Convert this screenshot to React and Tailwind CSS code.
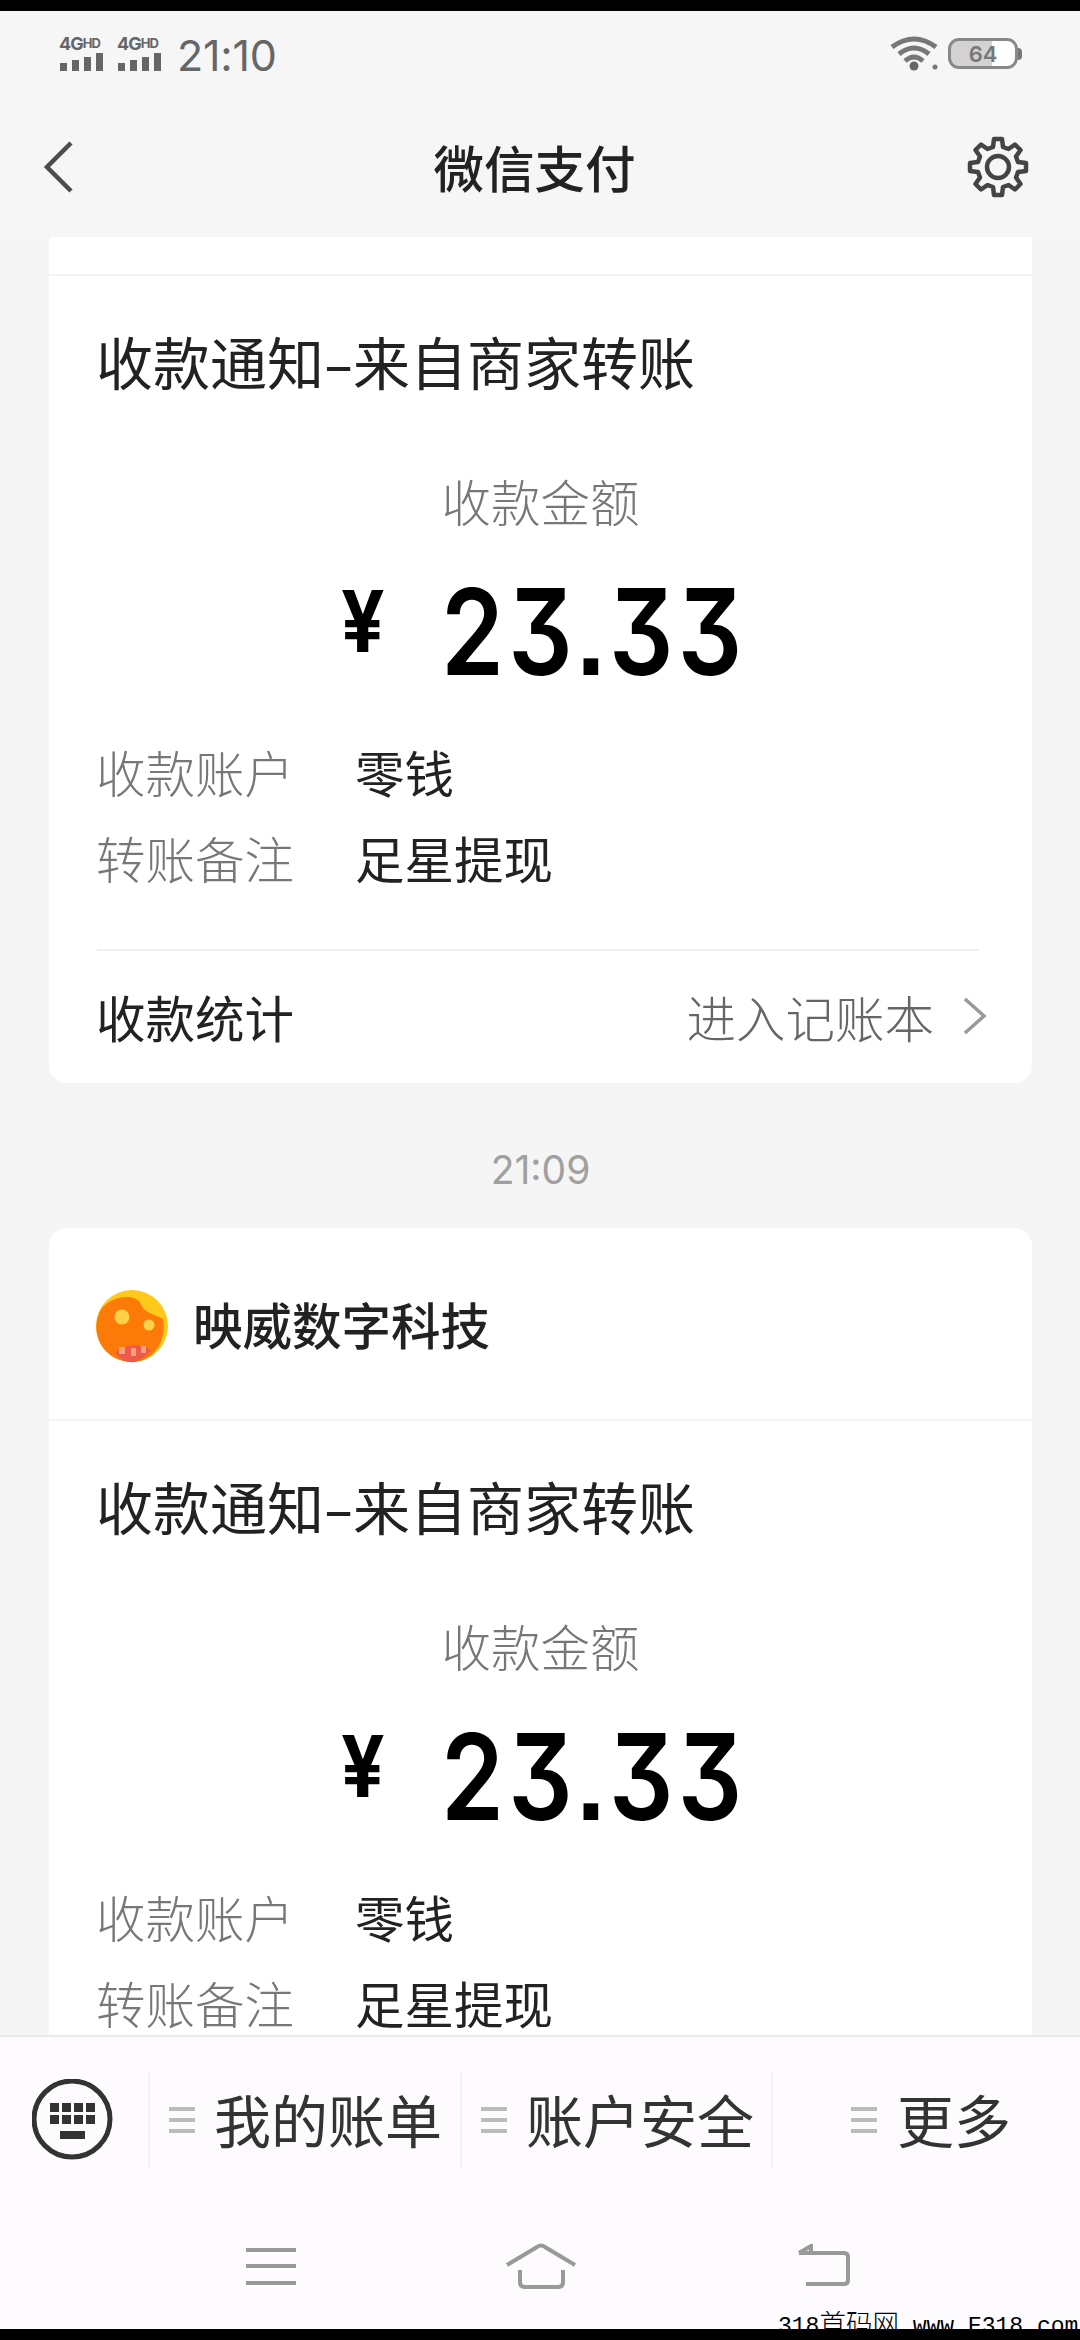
const details = [
  { label: "收款账户", value: "零钱" },
  { label: "转账备注", value: "足星提现" },
];

const menus = [
  { label: "我的账单", box: "w-[312px] pl-[19px] gap-[19px]" },
  { label: "账户安全", box: "w-[311px] pl-[19px] gap-[19px]" },
  { label: "更多", box: "flex-1 pl-[78px] gap-[20px]" },
];

function Signal({ net }) {
  return (
    <div className="flex flex-col items-start w-[47px]">
      <span className="font-['Inter'] text-[18px] leading-[16px] font-bold tracking-[-1px] whitespace-nowrap">
        4G<span className="text-[13px] align-[2px]">{net}</span>
      </span>
      <svg className="mt-px" width="46" height="19" viewBox="0 0 46 19" fill="currentColor">
        <rect x="1" y="10" width="7" height="8" />
        <rect x="13" y="7" width="7" height="11" />
        <rect x="25" y="4" width="7" height="14" />
        <rect x="37" y="0" width="7" height="18" />
      </svg>
    </div>
  );
}

function StatusBar() {
  return (
    <div className="flex items-center justify-between h-[85px] pl-[59px] pr-[58px] text-[#666]">
      <div className="flex items-center gap-[11px]">
        <Signal net="HD" />
        <Signal net="HD" />
        <span className="font-['Inter'] text-[43px] leading-[43px] mt-[3px] ml-[2px] tracking-[-0.2px]">21:10</span>
      </div>
      <div className="flex items-center gap-[9px]">
        <svg width="49" height="36" viewBox="0 0 49 36" fill="none" stroke="#777" strokeWidth="5">
          <path d="M2 11 Q24 -5 46 11" />
          <path d="M9 18 Q24 6 39 18" />
          <path d="M15 25 Q24 17 33 25" />
          <circle cx="24" cy="30" r="4.5" fill="#666" stroke="none" />
          <circle cx="45" cy="31" r="2.5" fill="#777" stroke="none" />
        </svg>
        <div className="flex items-center">
          <div className="flex items-center justify-center w-[70px] h-[31px] rounded-[11px] border-[3px] border-[#888] bg-linear-to-r from-[#d2d2d2] from-64% to-white to-64%">
            <span className="font-['Inter'] text-[22px] leading-[22px] font-semibold text-[#777]">64</span>
          </div>
          <div className="w-[4px] h-[12px] rounded-r-sm bg-[#777]" />
        </div>
      </div>
    </div>
  );
}

function Header() {
  return (
    <div className="flex items-center justify-between h-[141px] pl-[43px] pr-[50px]">
      <svg width="62" height="56" viewBox="0 0 62 56" fill="none" stroke="#4c4c4c" strokeWidth="4.5">
        <path d="M28 4 L4 28 L28 52" />
      </svg>
      <h1 className="-mt-[2px] -ml-[2px] text-[50.5px] leading-[60px] font-medium text-[#222]">微信支付</h1>
      <svg width="64" height="64" viewBox="-32 -32 64 64" fill="none" stroke="#444" strokeWidth="4.5" strokeLinejoin="round">
        <path d="M-5 -20 L-4 -28 H4 L5 -20 L10.5 -18 L17 -22.5 L22.5 -17 L18 -10.5 L20 -5 L28 -4 V4 L20 5 L18 10.5 L22.5 17 L17 22.5 L10.5 18 L5 20 L4 28 H-4 L-5 20 L-10.5 18 L-17 22.5 L-22.5 17 L-18 10.5 L-20 5 L-28 4 V-4 L-20 -5 L-18 -10.5 L-22.5 -17 L-17 -22.5 L-10.5 -18 Z" />
        <circle r="11" />
      </svg>
    </div>
  );
}

function Avatar() {
  return (
    <svg className="mt-[5px]" width="74" height="74" viewBox="0 0 74 74">
      <circle cx="37" cy="37" r="36" fill="#ffc91c" />
      <path d="M7 19 C18 6 38 5 45 13 C49 25 58 24 68 30 C72 51 59 73 37 73 C8 73 -8 42 7 19Z" fill="#fb7a08" />
      <path d="M20 64 Q37 50 56 61 Q37 84 20 64Z" fill="#ed5a49" />
      <circle cx="27" cy="28" r="7.5" fill="#ffd04a" />
      <circle cx="54" cy="36" r="5.5" fill="#ffd04a" />
      <g fill="#f7a07b">
        <rect x="24" y="58" width="6" height="7" />
        <rect x="36" y="59" width="5" height="8" />
        <rect x="46" y="57" width="5" height="7" />
      </g>
    </svg>
  );
}

function Notice() {
  return (
    <div className="flex flex-col px-[48px]">
      <h2 className="mt-[46px] h-[76px] -ml-px text-[57px] leading-[76px] text-[#222] whitespace-nowrap">
        收款通知<span className="inline-block w-[29px] text-center scale-x-[1.6]">-</span>来自商家转账
      </h2>
      <p className="mt-[71px] h-[64px] text-center text-[49.5px] leading-[64px] font-light text-[#777]">收款金额</p>
      <div className="flex items-start h-[130px] mt-[27px] pl-[244px] font-['Inter'] text-black">
        <span className="w-[100px] mt-[16px] text-[85px] leading-[92px] font-bold origin-left scale-x-[.9]">¥</span>
        <span className="text-[119px] leading-[144px] font-semibold origin-left scale-x-[.85] tracking-[5px] [font-feature-settings:'cv09'_1,'ss07'_1]">
          23.33
        </span>
      </div>
      <div className="flex flex-col mt-[39px]">
        {details.map((row) => (
          <div key={row.label} className="flex items-center h-[86px] text-[49.5px] leading-[64px]">
            <span className="w-[258px] -ml-px mr-px font-light text-[#777]">{row.label}</span>
            <span className="text-[#222]">{row.value}</span>
          </div>
        ))}
      </div>
    </div>
  );
}

function MessageList() {
  return (
    <main className="flex flex-col h-[1798px] pl-[49px] pr-[48px] overflow-hidden bg-[#f5f5f5]">
      <section className="flex flex-col shrink-0 h-[846px] rounded-b-[18px] bg-white">
        <div className="h-[39px] shrink-0 border-b-2 border-[#f4f4f4]" />
        <Notice />
        <div className="flex items-center justify-between ml-[48px] mr-[53px] mt-auto h-[134px] shrink-0 border-t-2 border-[#f0f0f0] text-[49.5px]">
          <span className="-ml-px text-[#222]">收款统计</span>
          <span className="flex items-center gap-[28px] font-light text-[#666] -mr-[9px]">
            进入记账本
            <svg width="26" height="42" viewBox="0 0 26 42" fill="none" stroke="#999" strokeWidth="3.5">
              <path d="M3 3 L22 20 L3 37" />
            </svg>
          </span>
        </div>
      </section>

      <time className="shrink-0 h-[145px] text-center font-['Inter'] text-[39px] leading-[174px] text-[#a0a0a0]">21:09</time>

      <section className="flex flex-col shrink-0 h-[900px] rounded-t-[18px] bg-white">
        <div className="flex items-center gap-[24px] h-[193px] shrink-0 pl-[46px] border-b-2 border-[#f4f4f4]">
          <Avatar />
          <span className="mt-px text-[49.5px] leading-[64px] font-medium text-[#222]">映威数字科技</span>
        </div>
        <Notice />
      </section>
    </main>
  );
}

function MenuBar() {
  return (
    <div className="flex items-center h-[166px] pl-[32px]">
      <svg className="mr-[34px] shrink-0" width="82" height="82" viewBox="0 0 82 82" fill="#333">
        <circle cx="40" cy="40" r="38" fill="none" stroke="#333" strokeWidth="5" />
        {[17, 29, 41, 53].map((x) => (
          <g key={x}>
            <rect x={x + 1} y="24" width="9" height="9" />
            <rect x={x + 1} y="36" width="9" height="9" />
          </g>
        ))}
        <rect x="28" y="52" width="25" height="8" />
      </svg>
      {menus.map((item) => (
        <div key={item.label} className={`flex items-center h-[98px] border-l-2 border-[#f2eff3] ${item.box}`}>
          <svg width="26" height="26" viewBox="0 0 26 26" stroke="#bbb" strokeWidth="4">
            <path d="M0 2 H26 M0 13 H26 M0 24 H26" />
          </svg>
          <span className="-mt-[5px] text-[57px] leading-[76px] text-[#333] whitespace-nowrap">{item.label}</span>
        </div>
      ))}
    </div>
  );
}

function SystemNav() {
  return (
    <div className="flex items-center h-[126px] pt-[2px] pl-[246px]">
      <svg width="50" height="40" viewBox="0 0 50 40" stroke="#999" strokeWidth="4">
        <path d="M0 3 H50 M0 19 H50 M0 36 H50" />
      </svg>
      <svg className="ml-[209px]" width="72" height="50" viewBox="0 0 72 50" fill="none" stroke="#999" strokeWidth="4">
        <path d="M2 23 L32 5 Q36 2 40 5 L70 23" />
        <path d="M15 28 V40 Q15 45 20 45 H53 Q58 45 58 40 V28" />
      </svg>
      <svg className="ml-[220px]" width="56" height="46" viewBox="0 0 56 46" fill="none" stroke="#999" strokeWidth="4">
        <path d="M2 9 H47 Q51 9 51 13 V36 Q51 40 47 40 H9 M2 9 L14 2 V9" />
      </svg>
    </div>
  );
}

export default function App() {
  return (
    <div className="relative flex flex-col w-[1080px] h-[2340px] overflow-hidden bg-[#f6f6f6] font-['Noto_Sans_CJK_SC',sans-serif]">
      <div className="h-[11px] shrink-0 bg-black" />
      <StatusBar />
      <Header />
      <MessageList />
      <footer className="flex flex-col flex-1 border-t-2 border-[#ece8ec] bg-[#fdfbfe]">
        <MenuBar />
        <SystemNav />
      </footer>
      <span className="absolute left-[778px] top-[2310px] whitespace-pre font-['Liberation_Mono','Noto_Sans_CJK_SC',monospace] text-[23px] leading-[32px] text-black">
        318<span className="text-[26.5px] font-light">首码网</span> www.E318.com
      </span>
      <div className="relative h-[11px] shrink-0 bg-black" />
    </div>
  );
}
